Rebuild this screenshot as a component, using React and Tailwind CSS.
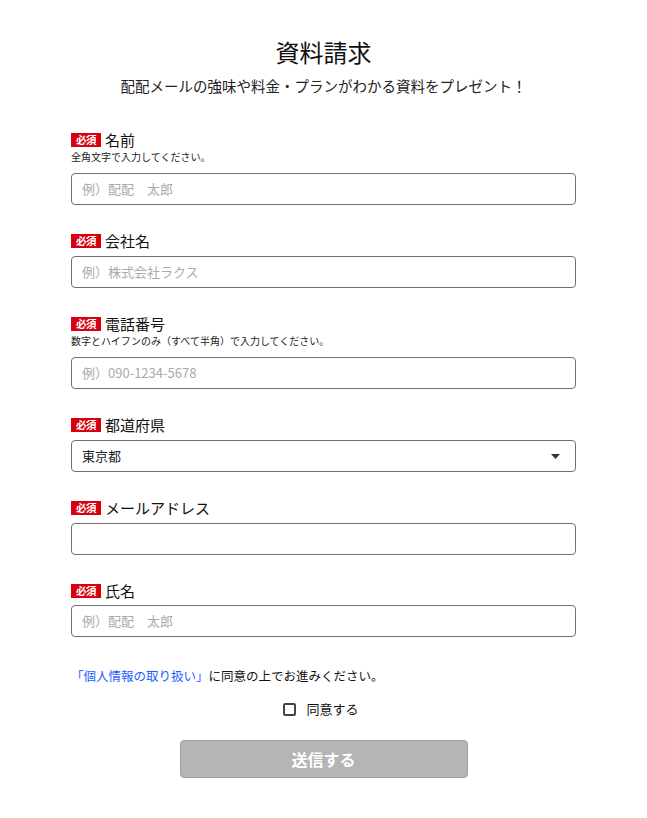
export default function App() {
  const Badge = () => (
    <span className="inline-flex h-[14px] w-[30px] items-center justify-center bg-[#d7000f] text-[10.5px] font-bold leading-none tracking-[-0.5px] text-white">
      必須
    </span>
  );
  const Label = ({ children }) => (
    <div className="flex h-5 items-center gap-[4px]">
      <Badge />
      <span className="text-[15px] leading-5 text-[#111]">{children}</span>
    </div>
  );
  const Hint = ({ children }) => (
    <div className="mb-[9px] text-[10px] leading-[14px] text-[#222]">{children}</div>
  );
  const Input = ({ placeholder }) => (
    <div className="flex h-8 items-center rounded-[4px] border border-[#707070] px-[10px] text-[13px] text-[#aaa]">
      {placeholder}
    </div>
  );
  return (
    <div
      className="min-h-[818px] bg-white text-black"
      style={{ fontFamily: '"Noto Sans CJK JP", "Noto Sans", sans-serif' }}
    >
      <div className="mx-auto w-[505px] pt-[35px]">
        <h1 className="text-center text-[24px] leading-[34px] text-[#111]">資料請求</h1>
        <p className="mt-[6px] text-center text-[14.5px] leading-[22px] text-[#222]">
          配配メールの強味や料金・プランがわかる資料をプレゼント！
        </p>

        <div className="mt-[33px]">
          <Label>名前</Label>
          <Hint>全角文字で入力してください。</Hint>
          <Input placeholder="例）配配　太郎" />
        </div>

        <div className="mt-[26px]">
          <div className="mb-[5px]"><Label>会社名</Label></div>
          <Input placeholder="例）株式会社ラクス" />
        </div>

        <div className="mt-[26px]">
          <Label>電話番号</Label>
          <Hint>数字とハイフンのみ（すべて半角）で入力してください。</Hint>
          <Input placeholder="例）090-1234-5678" />
        </div>

        <div className="mt-[26px]">
          <div className="mb-[5px]"><Label>都道府県</Label></div>
          <div className="flex h-8 items-center justify-between rounded-[4px] border border-[#707070] pl-[10px] pr-[15px] text-[13px] text-[#222]">
            <span>東京都</span>
            <svg width="9" height="5" viewBox="0 0 9 5"><path d="M0 0h9L4.5 5z" fill="#333" /></svg>
          </div>
        </div>

        <div className="mt-[26px]">
          <div className="mb-[5px]"><Label>メールアドレス</Label></div>
          <Input placeholder="" />
        </div>

        <div className="mt-[26px]">
          <div className="mb-[4px]"><Label>氏名</Label></div>
          <Input placeholder="例）配配　太郎" />
        </div>

        <p className="mt-[29px] text-[12.5px] leading-5 text-[#111]">
          <span className="text-[#1e5cff]">「個人情報の取り扱い」</span>に同意の上でお進みください。
        </p>

        <div className="mt-[13px] flex items-center justify-center gap-[10px] pr-[5px]">
          <span className="h-[13px] w-[13px] rounded-[2px] border-2 border-[#444]" />
          <span className="text-[13px] leading-5 text-[#111]">同意する</span>
        </div>

        <div className="mt-[21px] flex justify-center">
          <div className="flex h-[38px] w-[288px] items-center justify-center rounded-[4px] border border-[#a0a0a0] bg-[#b5b5b6] text-[16px] font-bold text-white">
            送信する
          </div>
        </div>
      </div>
    </div>
  );
}
